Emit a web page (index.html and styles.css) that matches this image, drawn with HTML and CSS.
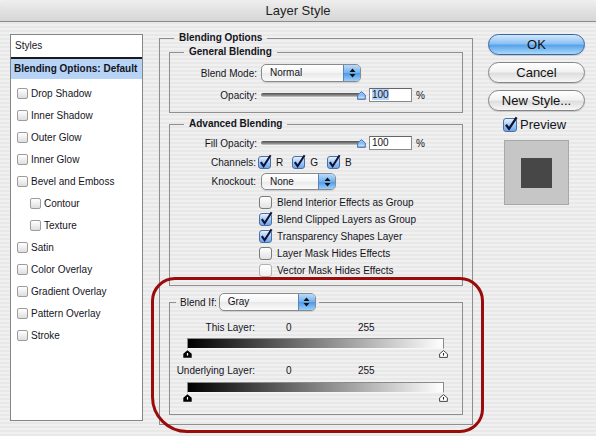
FILE: index.html
```html
<!DOCTYPE html>
<html>
<head>
<meta charset="utf-8">
<title>Layer Style</title>
<link rel="stylesheet" href="styles.css">
</head>
<body>
<div class="window">
  <div class="titlebar">Layer Style</div>
  <div class="content">
    <div class="styles-list">
      <div class="list-head">Styles</div>
      <div class="list-sel">Blending Options: Default</div>
      <div class="list-items">
        <div class="item"><span class="mini-cb"></span>Drop Shadow</div>
        <div class="item"><span class="mini-cb"></span>Inner Shadow</div>
        <div class="item"><span class="mini-cb"></span>Outer Glow</div>
        <div class="item"><span class="mini-cb"></span>Inner Glow</div>
        <div class="item"><span class="mini-cb"></span>Bevel and Emboss</div>
        <div class="item sub"><span class="mini-cb"></span>Contour</div>
        <div class="item sub"><span class="mini-cb"></span>Texture</div>
        <div class="item"><span class="mini-cb"></span>Satin</div>
        <div class="item"><span class="mini-cb"></span>Color Overlay</div>
        <div class="item"><span class="mini-cb"></span>Gradient Overlay</div>
        <div class="item"><span class="mini-cb"></span>Pattern Overlay</div>
        <div class="item"><span class="mini-cb"></span>Stroke</div>
      </div>
    </div>

    <fieldset class="box outer">
      <legend class="bold-legend">Blending Options</legend>

      <fieldset class="box general">
        <legend class="bold-legend">General Blending</legend>
        <div class="row r-mode">
          <span class="lbl">Blend Mode:</span>
          <div class="popup w-mode">
            <span class="pv">Normal</span>
            <span class="parr"><svg width="7" height="10" viewBox="0 0 7 10"><path d="M3.5 0.5 L6.5 4 H0.5 Z M3.5 9.5 L6.5 6 H0.5 Z" fill="#111"/></svg></span>
          </div>
        </div>
        <div class="row r-op">
          <span class="lbl">Opacity:</span>
          <div class="slider">
            <span class="track"></span>
            <svg class="thumb" width="9" height="9" viewBox="0 0 9 9"><path d="M4.5 0.6 L8.4 4 V8.4 H0.6 V4 Z" fill="#8dbdf2" stroke="#3f6aa8" stroke-width="0.9"/><path d="M1.5 6.2 H7.5" stroke="#d9ebff" stroke-width="1"/></svg>
          </div>
          <span class="num"><span class="hl">100</span></span>
          <span class="pct">%</span>
        </div>
      </fieldset>

      <fieldset class="box advanced">
        <legend class="bold-legend">Advanced Blending</legend>
        <div class="row r-fill">
          <span class="lbl">Fill Opacity:</span>
          <div class="slider">
            <span class="track"></span>
            <svg class="thumb" width="9" height="9" viewBox="0 0 9 9"><path d="M4.5 0.6 L8.4 4 V8.4 H0.6 V4 Z" fill="#8dbdf2" stroke="#3f6aa8" stroke-width="0.9"/><path d="M1.5 6.2 H7.5" stroke="#d9ebff" stroke-width="1"/></svg>
          </div>
          <span class="num">100</span>
          <span class="pct">%</span>
        </div>
        <div class="row r-ch">
          <span class="lbl lbl-ch">Channels:</span>
          <span class="cb on ch-first"><svg width="13" height="13" viewBox="0 0 13 13"><path d="M2.8 6.2 L5.6 10.2 L12.6 -0.8" fill="none" stroke="#10123a" stroke-width="2.1"/></svg></span>
          <span class="ch-t">R</span>
          <span class="cb on"><svg width="13" height="13" viewBox="0 0 13 13"><path d="M2.8 6.2 L5.6 10.2 L12.6 -0.8" fill="none" stroke="#10123a" stroke-width="2.1"/></svg></span>
          <span class="ch-t">G</span>
          <span class="cb on"><svg width="13" height="13" viewBox="0 0 13 13"><path d="M2.8 6.2 L5.6 10.2 L12.6 -0.8" fill="none" stroke="#10123a" stroke-width="2.1"/></svg></span>
          <span class="ch-t">B</span>
        </div>
        <div class="row r-ko">
          <span class="lbl lbl-ch">Knockout:</span>
          <div class="popup w-ko">
            <span class="pv">None</span>
            <span class="parr"><svg width="7" height="10" viewBox="0 0 7 10"><path d="M3.5 0.5 L6.5 4 H0.5 Z M3.5 9.5 L6.5 6 H0.5 Z" fill="#111"/></svg></span>
          </div>
        </div>
        <div class="opts">
          <div class="opt"><span class="cb"></span>Blend Interior Effects as Group</div>
          <div class="opt"><span class="cb on"><svg width="13" height="13" viewBox="0 0 13 13"><path d="M2.8 6.2 L5.6 10.2 L12.6 -0.8" fill="none" stroke="#10123a" stroke-width="2.1"/></svg></span>Blend Clipped Layers as Group</div>
          <div class="opt"><span class="cb on"><svg width="13" height="13" viewBox="0 0 13 13"><path d="M2.8 6.2 L5.6 10.2 L12.6 -0.8" fill="none" stroke="#10123a" stroke-width="2.1"/></svg></span>Transparency Shapes Layer</div>
          <div class="opt"><span class="cb"></span>Layer Mask Hides Effects</div>
          <div class="opt"><span class="cb dim"></span>Vector Mask Hides Effects</div>
        </div>
      </fieldset>

      <fieldset class="box blendif">
        <legend class="bi-legend">
          <span>Blend If:</span>
          <div class="popup w-gray">
            <span class="pv">Gray</span>
            <span class="parr"><svg width="7" height="10" viewBox="0 0 7 10"><path d="M3.5 0.5 L6.5 4 H0.5 Z M3.5 9.5 L6.5 6 H0.5 Z" fill="#111"/></svg></span>
          </div>
        </legend>
        <div class="brow b1"><span class="blbl">This Layer:</span><span class="v0">0</span><span class="v255">255</span></div>
        <div class="gbar"></div>
        <div class="handles">
          <svg width="9" height="8" viewBox="0 0 9 8"><path d="M4.5 0.3 L8.7 3.8 V7.7 H0.3 V3.8 Z" fill="#000"/><path d="M4.5 3 V5.6" stroke="#fff" stroke-width="1.2"/></svg>
          <svg width="9" height="8" viewBox="0 0 9 8"><path d="M4.5 0.6 L8.4 3.9 V7.4 H0.6 V3.9 Z" fill="#fff" stroke="#333" stroke-width="0.9"/><path d="M4.5 3 V5.6" stroke="#222" stroke-width="1.1"/></svg>
        </div>
        <div class="brow b2"><span class="blbl">Underlying Layer:</span><span class="v0">0</span><span class="v255">255</span></div>
        <div class="gbar g2"></div>
        <div class="handles">
          <svg width="9" height="8" viewBox="0 0 9 8"><path d="M4.5 0.3 L8.7 3.8 V7.7 H0.3 V3.8 Z" fill="#000"/><path d="M4.5 3 V5.6" stroke="#fff" stroke-width="1.2"/></svg>
          <svg width="9" height="8" viewBox="0 0 9 8"><path d="M4.5 0.6 L8.4 3.9 V7.4 H0.6 V3.9 Z" fill="#fff" stroke="#333" stroke-width="0.9"/><path d="M4.5 3 V5.6" stroke="#222" stroke-width="1.1"/></svg>
        </div>
      </fieldset>
    </fieldset>

    <div class="side">
      <div class="btn default">OK</div>
      <div class="btn">Cancel</div>
      <div class="btn">New Style...</div>
      <div class="preview-row">
        <span class="pcb"><svg width="14" height="14" viewBox="0 0 14 14"><path d="M3 6.8 L6 10.8 L13.6 -0.6" fill="none" stroke="#10123a" stroke-width="2.3"/></svg></span>
        <span class="ptext">Preview</span>
      </div>
      <div class="swatch"><div class="swatch-inner"></div></div>
    </div>
  </div>
  <div class="annotation"></div>
</div>
</body>
</html>
```

FILE: styles.css
```css
* { box-sizing: border-box; }
html, body { margin: 0; padding: 0; }
body {
  width: 596px;
  height: 436px;
  overflow: hidden;
  font-family: "Liberation Sans", Arial, sans-serif;
  font-size: 10px;
  color: #14141c;
  background: repeating-linear-gradient(to bottom, #f0f0f0 0, #f0f0f0 2px, #e8e8e8 2px, #e8e8e8 4px);
}
.window { position: relative; width: 596px; height: 436px; }

.titlebar {
  height: 22px;
  border-bottom: 1px solid #8c8c8c;
  border-radius: 6px 6px 0 0;
  background: linear-gradient(#eeeeee, #e2e2e2 50%, #d6d6d6);
  text-align: center;
  font-size: 13px;
  line-height: 21px;
  color: #1e1e1e;
}

.content { display: flex; align-items: flex-start; padding-left: 10px; }

/* styles list */
.styles-list {
  margin-top: 12px;
  width: 133px;
  height: 387px;
  border: 1px solid #858585;
  background: #fff;
}
.list-head {
  height: 24px;
  line-height: 22px;
  padding-left: 4px;
  border-bottom: 2px solid #1a1a1a;
}
.list-sel {
  height: 20px;
  line-height: 20px;
  padding-left: 3px;
  background: #b7d3f6;
  font-weight: bold;
}
.list-items { padding-top: 3px; }
.item {
  height: 22px;
  display: flex;
  align-items: center;
  padding-left: 6px;
}
.item.sub { padding-left: 19px; }
.mini-cb {
  width: 11px;
  height: 11px;
  margin-right: 3px;
  border: 1px solid #9c9c9c;
  border-radius: 2px;
  background: linear-gradient(#ffffff, #dedede);
}

/* fieldsets */
.box {
  margin: 0;
  padding: 0;
  min-width: 0;
  border: 1px solid #8e8e8e;
}
.bold-legend {
  padding: 0 5px;
  margin-left: 14px;
  font-weight: bold;
  line-height: 12px;
}
.outer {
  margin-left: 16px;
  margin-top: 10px;
  width: 314px;
  padding: 2px 9px 9px 9px;
}
.outer > .bold-legend { margin-left: 5px; }
.general { padding: 0 0 10px 0; }
.advanced { margin-top: 5px; padding: 0 0 6px 0; }
.blendif { margin-top: 7px; padding: 0 0 12px 0; }

.row { display: flex; align-items: center; }
.lbl { width: 87px; text-align: right; }
.lbl-ch { width: 86px; }
.r-mode { margin-top: 6px; height: 18px; }
.r-mode .popup { margin-left: 4px; }
.r-op, .r-fill { margin-top: 6px; height: 14px; }
.r-ch { margin-top: 6px; height: 13px; }
.r-ko { margin-top: 4px; height: 17px; }
.r-ko .popup { margin-left: 5px; }

/* popup menus */
.popup {
  display: flex;
  align-items: stretch;
  height: 18px;
  border: 1px solid #8a8a8a;
  border-radius: 5px;
  overflow: hidden;
  background: linear-gradient(#ffffff, #f4f4f4 50%, #e8e8e8 51%, #fbfbfb);
  box-shadow: 0 1px 1px rgba(0, 0, 0, 0.12);
}
.pv { flex: 1; padding-left: 8px; line-height: 16px; font-size: 10px; }
.parr {
  width: 17px;
  display: flex;
  align-items: center;
  justify-content: center;
  border-left: 1px solid #5d82b6;
  background: linear-gradient(#b9dbfc, #6fb0ef 50%, #4b97e8 51%, #9ad0fb);
}
.w-mode { width: 100px; }
.w-ko { width: 75px; height: 17px; }
.w-gray { width: 97px; margin-left: 2px; font-weight: normal; }

/* slider */
.slider {
  width: 109px;
  display: flex;
  align-items: center;
  padding-left: 4px;
}
.track {
  width: 100px;
  height: 4px;
  border-radius: 2px;
  background: linear-gradient(#4e4e4e, #8a8a8a 60%, #cfcfcf);
}
.thumb { margin-left: -3px; display: block; }
.num {
  width: 43px;
  height: 14px;
  margin-left: 3px;
  border: 1px solid #8a8a8a;
  border-top-color: #666;
  background: #fff;
  padding-left: 2px;
  line-height: 12px;
}
.hl { background: #b5d4fd; }
.pct { margin-left: 4px; }

/* checkboxes */
.cb {
  position: relative;
  width: 13px;
  height: 13px;
  flex: none;
  border: 1px solid #7b7b7b;
  border-radius: 3px;
  background: linear-gradient(#ffffff, #e2e2e2);
}
.cb svg { position: absolute; left: -1px; top: -1px; overflow: visible; }
.cb.on {
  background: linear-gradient(#e6f1fd, #9cc6f3 55%, #6ea8ea);
  border-color: #4b6ea3;
}
.cb.dim { border-color: #b0b0b0; background: linear-gradient(#fff, #eee); }
.ch-first { margin-left: 2px; }
.ch-t { margin: 0 9px 0 5px; }

.opts { margin-top: 4px; }
.opt {
  height: 17px;
  display: flex;
  align-items: center;
  padding-left: 89px;
}
.opt .cb { margin-right: 5px; }

/* blend if */
.bi-legend {
  display: flex;
  align-items: center;
  margin-left: 6px;
  padding: 0 3px 0 4px;
  height: 18px;
}
.brow { display: flex; line-height: 12px; }
.b1 { margin-top: 11px; }
.b2 { margin-top: 7px; }
.blbl { width: 85px; text-align: right; }
.v0 { margin-left: 31px; width: 72px; }
.gbar {
  margin-top: 4px;
  margin-left: 17px;
  width: 257px;
  height: 11px;
  border: 1px solid #8a8a8a;
  border-bottom-color: #f6f6f6;
  background: linear-gradient(to right, #000, #fff);
}
.g2 { margin-top: 5px; }
.handles {
  margin-top: 1px;
  margin-left: 13px;
  width: 265px;
  height: 8px;
  display: flex;
  justify-content: space-between;
}
.handles svg { display: block; }

/* right side */
.side {
  margin-left: 15px;
  margin-top: 12px;
  width: 97px;
  display: flex;
  flex-direction: column;
}
.btn {
  height: 21px;
  margin-bottom: 7px;
  border: 1px solid #858585;
  border-radius: 11px;
  background: linear-gradient(#ffffff, #f2f2f2 45%, #dedede 55%, #f7f7f7);
  box-shadow: 0 1px 1px rgba(0, 0, 0, 0.15);
  text-align: center;
  font-size: 13px;
  line-height: 19px;
  color: #111;
}
.btn.default {
  border-color: #3c64a0;
  background: linear-gradient(#d2e8fd, #8cc2f3 45%, #5aa2ea 55%, #a7dafc);
}
.preview-row { display: flex; align-items: center; height: 14px; margin-left: 15px; }
.pcb {
  position: relative;
  width: 14px;
  height: 14px;
  border: 1px solid #4b6ea3;
  border-radius: 3px;
  background: linear-gradient(#e6f1fd, #9cc6f3 55%, #6ea8ea);
}
.pcb svg { position: absolute; left: -1px; top: -1px; overflow: visible; }
.ptext { margin-left: 3px; font-size: 13px; line-height: 14px; }
.swatch {
  margin-top: 8px;
  margin-left: 16px;
  width: 65px;
  height: 65px;
  border: 1px solid #a8a8a8;
  background: #c6c6c6;
  display: flex;
  align-items: center;
  justify-content: center;
}
.swatch-inner { width: 31px; height: 30px; background: #474747; }

/* red hand-drawn highlight */
.annotation {
  position: absolute;
  left: 151px;
  top: 277px;
  width: 333px;
  height: 156px;
  border: 3px solid #9a0c0c;
  border-radius: 24px 24px 24px 36px;
  pointer-events: none;
}
```
